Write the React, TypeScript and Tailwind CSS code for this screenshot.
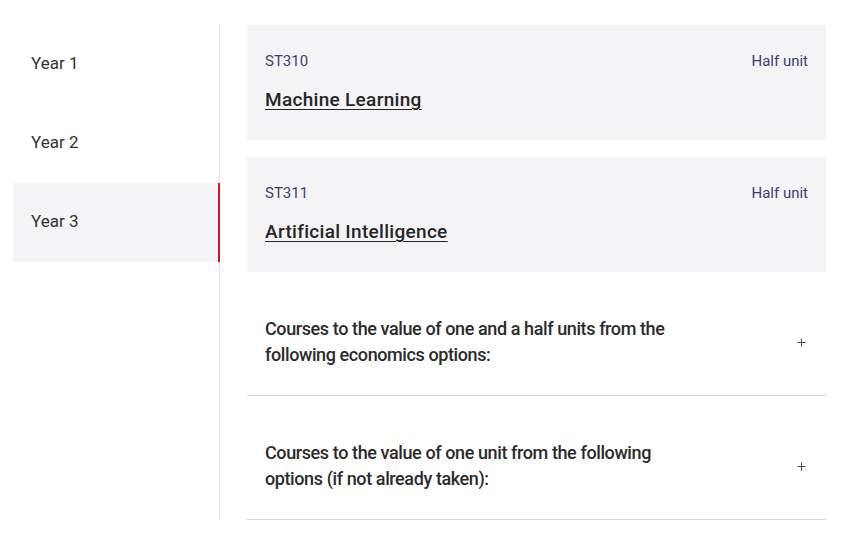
import { useState } from 'react'

const years = ['Year 1', 'Year 2', 'Year 3']

const courses = [
  { code: 'ST310', title: 'Machine Learning', unit: 'Half unit' },
  { code: 'ST311', title: 'Artificial Intelligence', unit: 'Half unit' },
]

const options = [
  'Courses to the value of one and a half units from the following economics options:',
  'Courses to the value of one unit from the following options (if not already taken):',
]

const Plus = () => (
  <svg width="9" height="9" viewBox="0 0 9 9" className="shrink-0">
    <path d="M4.5 0.5v8M0.5 4.5h8" stroke="#4a4a4a" strokeWidth="1" />
  </svg>
)

export default function App() {
  const [active, setActive] = useState(2)

  return (
    <div
      className="flex w-[847px] bg-white pt-6 text-[#333]"
      style={{ fontFamily: 'Roboto, "Liberation Sans", sans-serif' }}
    >
      {/* === YEAR TABS === */}
      <nav className="ml-[13px] w-[207px] border-r border-[#e6e6e6] pt-px">
        {years.map((year, i) => (
          <button
            key={year}
            onClick={() => setActive(i)}
            className={
              i === active
                ? 'flex h-[79px] w-[calc(100%+1px)] items-center bg-[#f4f4f6] pb-[2px] pl-[18px] text-left text-[17px] border-r-2 border-[#d50f25]'
                : 'flex h-[79px] w-full items-center pb-[2px] pl-[18px] text-left text-[17px]'
            }
          >
            {year}
          </button>
        ))}
      </nav>

      {/* === COURSES === */}
      <main className="ml-[27px] flex w-[579px] flex-col pt-px">
        <div className="flex flex-col gap-[17px]">
          {courses.map((c) => (
            <div
              key={c.code}
              className="flex h-[115px] flex-col bg-[#f4f4f6] px-[18px] pt-[26px]"
            >
              <div className="flex h-5 items-center justify-between text-[15px] leading-5 text-[#403d73]">
                <span>{c.code}</span>
                <span>{c.unit}</span>
              </div>
              <a
                href="#"
                className="mt-[16px] self-start text-[19px] font-medium leading-[26px] tracking-[0.3px] text-[#262626] underline underline-offset-[3px] decoration-1"
              >
                {c.title}
              </a>
            </div>
          ))}
        </div>

        {options.map((text) => (
          <div
            key={text}
            className="flex items-center justify-between border-b border-[#d6d6d6] pb-[27px] pl-[18px] pr-[20px] pt-[44px]"
          >
            <p className="w-[430px] text-[18px] font-medium leading-[26px] tracking-[-0.4px] text-[#2b2b2b]">
              {text}
            </p>
            <Plus />
          </div>
        ))}
      </main>
    </div>
  )
}
